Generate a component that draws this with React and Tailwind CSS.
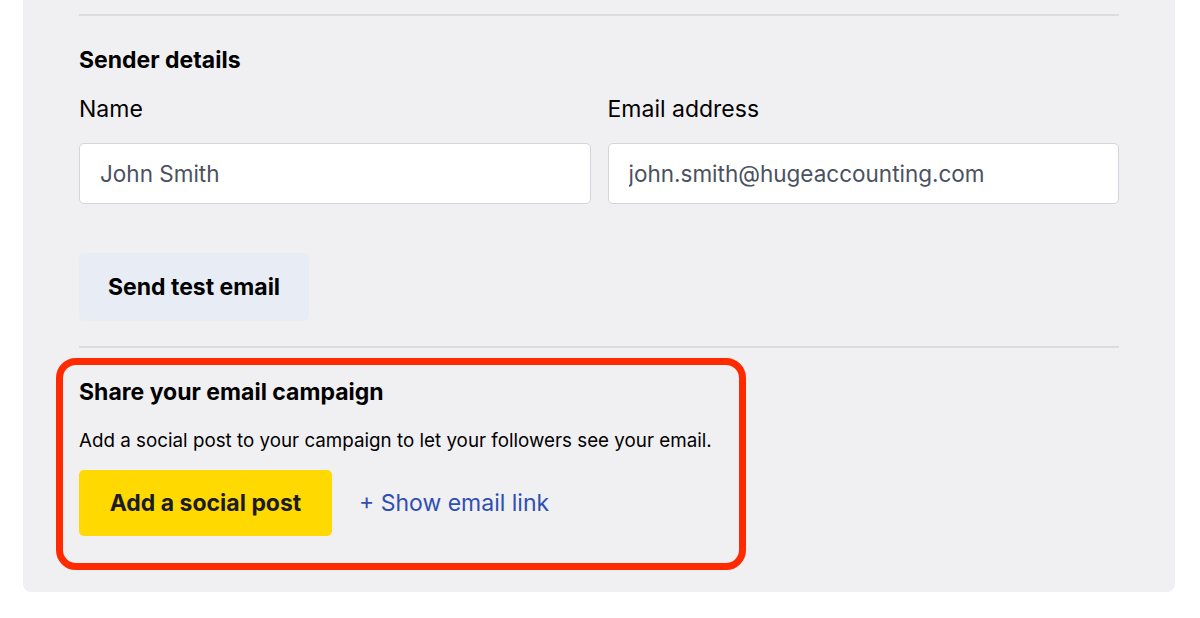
export default function App() {
  return (
    <div className="w-[1200px] h-[618px] bg-white overflow-hidden" style={{ fontFamily: "Inter, 'Open Sans', sans-serif" }}>
      <div className="ml-[23px] w-[1152px] h-[592px] bg-[#f0f0f3] rounded-b-[8px] px-[56px] pt-[14px]">
        <div className="border-t-2 border-[#dcdce0]" />

        <h2 className="mt-[29px] text-[23px] leading-[30px] font-bold text-black">Sender details</h2>

        <div className="mt-[19px] flex gap-[17px]">
          <div className="flex-1">
            <label className="block text-[23px] leading-[30px] text-black">Name</label>
            <input
              readOnly
              value="John Smith"
              className="mt-[19px] w-full h-[61px] rounded-[5px] border border-[#d2d6dc] bg-white px-[20px] text-[22.5px] text-[#4b5160] outline-none"
            />
          </div>
          <div className="flex-1">
            <label className="block text-[23px] leading-[30px] text-black">Email address</label>
            <input
              readOnly
              value="john.smith@hugeaccounting.com"
              className="mt-[19px] w-full h-[61px] rounded-[5px] border border-[#d2d6dc] bg-white px-[20px] text-[22.5px] text-[#4b5160] outline-none"
            />
          </div>
        </div>

        <button className="mt-[49px] h-[68px] w-[230px] rounded-[5px] bg-[#e8ecf5] text-[23px] font-bold text-black">
          Send test email
        </button>

        <div className="mt-[25px] border-t-2 border-[#dcdce0]" />

        <div className="mt-[10px] -ml-[23px] w-[690px] h-[212px] rounded-[20px] border-[7px] border-[#ff2a00] pl-[16px] pt-[12px]">
          <h3 className="text-[23px] leading-[30px] font-bold text-black">Share your email campaign</h3>
          <p className="mt-[22px] text-[18.8px] leading-[24px] text-black">
            Add a social post to your campaign to let your followers see your email.
          </p>
          <div className="mt-[17px] flex items-center gap-[27px]">
            <button className="h-[66px] w-[253px] rounded-[5px] bg-[#ffd900] text-[23px] font-bold text-[#1c1c28]">
              Add a social post
            </button>
            <a className="text-[23px] text-[#2f4fb0]">+ Show email link</a>
          </div>
        </div>
      </div>
    </div>
  );
}
